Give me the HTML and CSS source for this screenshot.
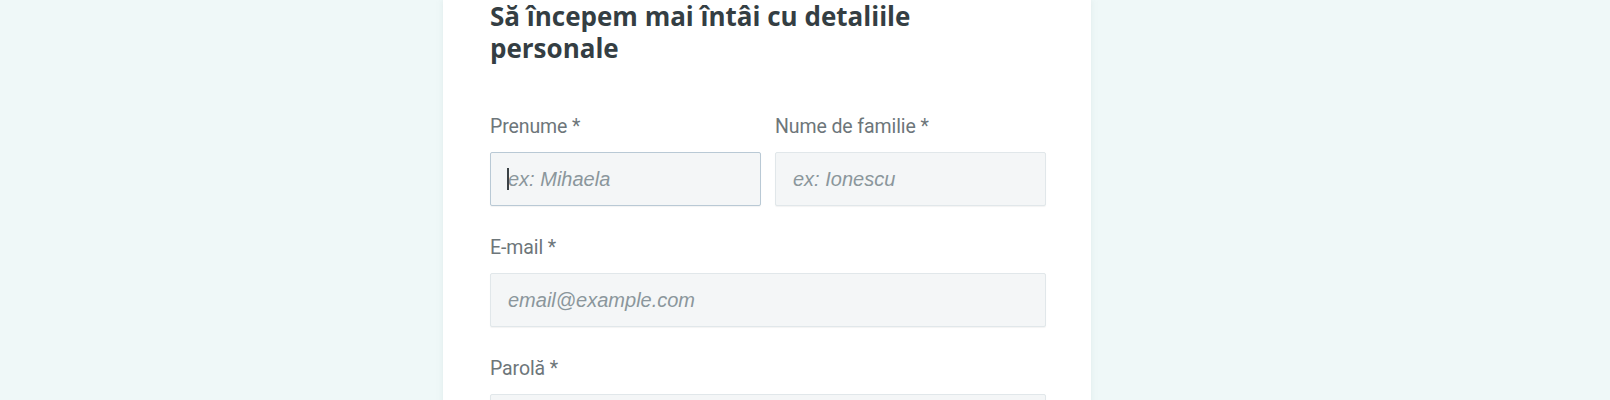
FILE: index.html
```html
<!DOCTYPE html>
<html lang="ro">
<head>
    <meta charset="UTF-8">
    <meta name="viewport" content="width=device-width, initial-scale=1.0">
    <title>Detalii personale</title>
    <link rel="stylesheet" href="styles.css">
</head>
<body>

<div class="card">
    <h2 class="title">Să începem mai întâi cu detaliile personale</h2>

    <form class="form">
        <div class="row">
            <div class="group">
                <label class="label" for="prenume">Prenume *</label>
                <div class="field">
                    <input class="input focused" id="prenume" type="text" placeholder="ex: Mihaela">
                    <span class="caret"></span>
                </div>
            </div>
            <div class="group">
                <label class="label" for="nume">Nume de familie *</label>
                <input class="input" id="nume" type="text" placeholder="ex: Ionescu">
            </div>
        </div>

        <div class="group">
            <label class="label" for="email">E-mail *</label>
            <input class="input" id="email" type="email" placeholder="email@example.com">
        </div>

        <div class="group">
            <label class="label" for="parola">Parolă *</label>
            <input class="input" id="parola" type="password">
        </div>
    </form>
</div>

</body>
</html>
```

FILE: styles.css
```css
html, body {
    margin: 0;
    padding: 0;
    height: 100%;
    overflow: hidden;
}
body {
    background-color: #eff8f8;
    font-family: Roboto, "Liberation Sans", sans-serif;
}
.card {
    width: 648px;
    min-height: 100%;
    margin-left: 443px;
    padding: 0 45px 0 47px;
    box-sizing: border-box;
    background-color: #fff;
    box-shadow: 0 0 6px rgba(180, 200, 200, 0.25);
}
.title {
    margin: 0;
    width: 480px;
    font-family: "Open Sans", "Noto Sans", sans-serif;
    font-size: 26px;
    font-weight: 700;
    line-height: 32px;
    color: #343e43;
}
.form {
    display: flex;
    flex-direction: column;
    gap: 30px;
    margin-top: 51px;
}
.row {
    display: grid;
    grid-template-columns: 1fr 1fr;
    gap: 14px;
}
.group {
    display: flex;
    flex-direction: column;
    gap: 13px;
}
.label {
    font-size: 19.5px;
    line-height: 24px;
    color: #6d767a;
    letter-spacing: -0.1px;
}
.field {
    position: relative;
}
.input {
    width: 100%;
    height: 54px;
    box-sizing: border-box;
    padding: 0 17px;
    border: 1px solid #e1e7ea;
    border-radius: 2px;
    background-color: #f4f6f7;
    box-shadow: 0 1px 1px rgba(0, 0, 0, 0.05);
    font-family: "Liberation Sans", Arial, sans-serif;
    font-size: 20px;
    color: #333d42;
    outline: none;
}
.input::placeholder {
    color: #8b969c;
    font-style: italic;
}
.input.focused {
    border-color: #b9c9d5;
}
.caret {
    position: absolute;
    left: 17px;
    top: 16px;
    width: 2px;
    height: 22px;
    background-color: #3b4246;
}
```
